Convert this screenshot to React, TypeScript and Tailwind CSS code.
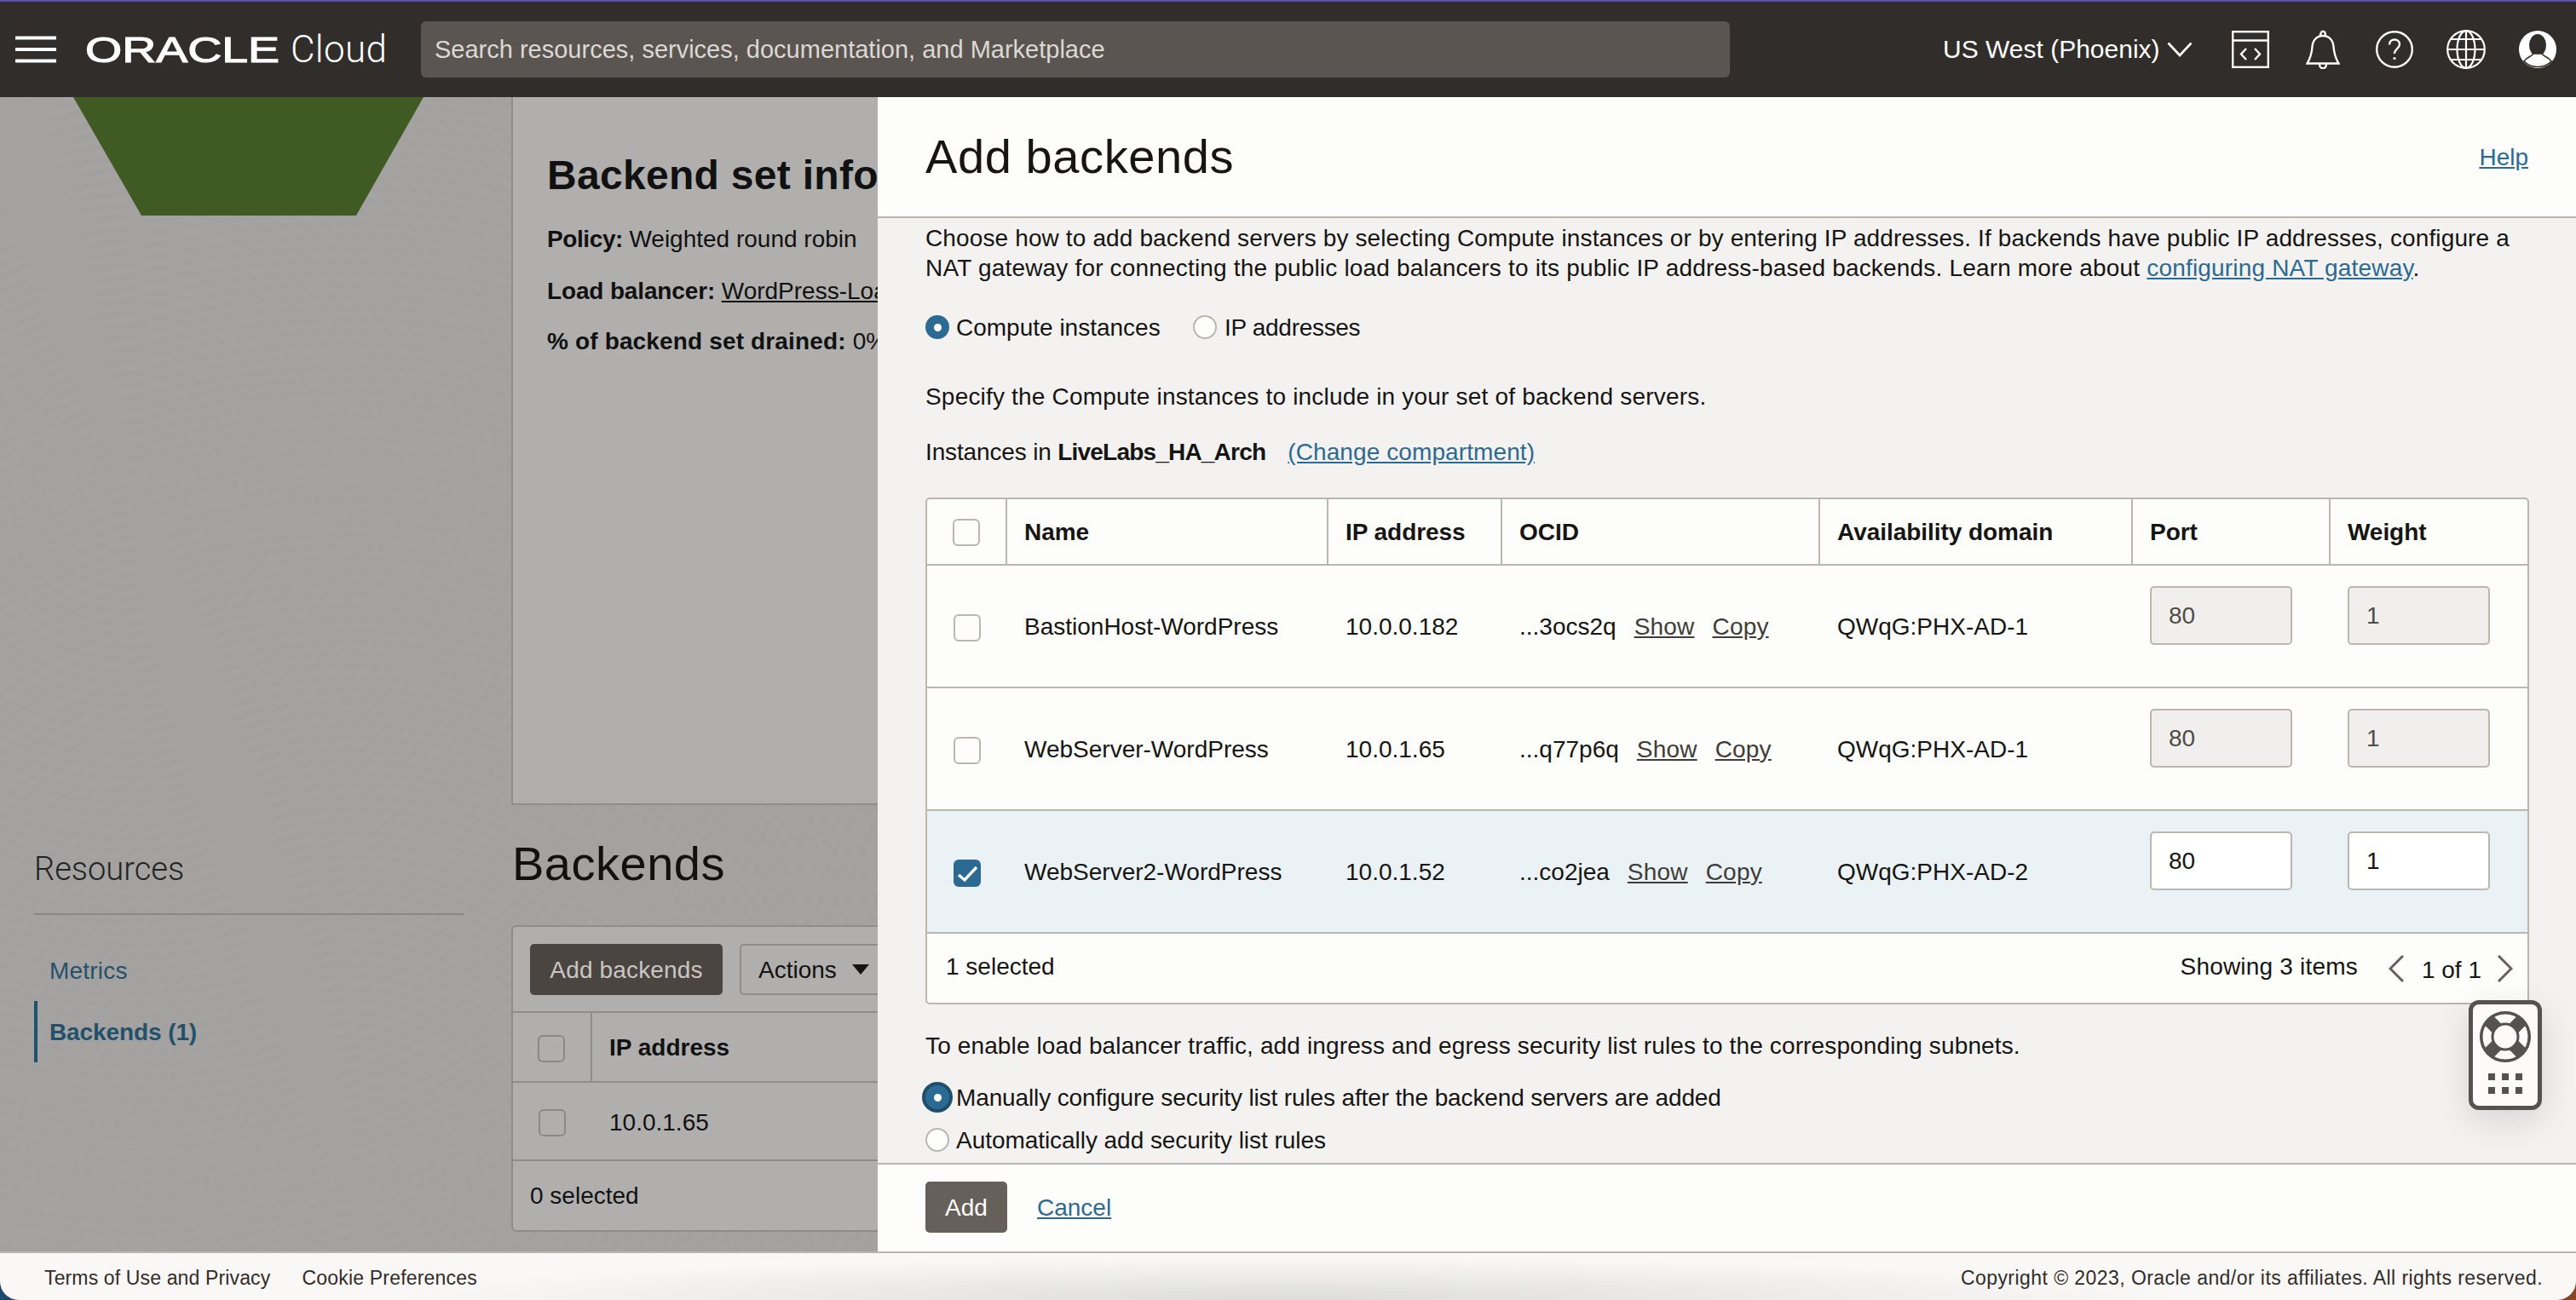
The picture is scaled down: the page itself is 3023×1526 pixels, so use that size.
import React from "react";

const COLS = "grid grid-cols-[94px_377px_204px_373px_367px_232px_1fr]";
const texture =
  "bg-[repeating-radial-gradient(circle_at_150px_450px,rgba(0,0,0,0.012)_0px,transparent_7px,rgba(0,0,0,0.012)_14px),repeating-radial-gradient(circle_at_410px_1270px,rgba(0,0,0,0.012)_0px,transparent_7px,rgba(0,0,0,0.012)_14px)]";

function Check({ checked = false, dim = false }: { checked?: boolean; dim?: boolean }) {
  if (checked) {
    return (
      <div className="w-[32px] h-[32px] rounded-[6px] bg-[#2b6a92] flex items-center justify-center">
        <svg width="24" height="24" viewBox="0 0 24 24" fill="none">
          <path d="M2 14l7 6L23 5" stroke="#fff" strokeWidth="3.4" />
        </svg>
      </div>
    );
  }
  return (
    <div
      className={
        dim
          ? "w-[32px] h-[32px] rounded-[6px] border-2 border-[#8b8886] bg-[#b0afad]"
          : "w-[32px] h-[32px] rounded-[6px] border-2 border-[#bcb6b1] bg-[#fdfdfb]"
      }
    />
  );
}

function Radio({ on = false, focus = false }: { on?: boolean; focus?: boolean }) {
  if (on) {
    return (
      <div
        className={
          focus
            ? "w-[28px] h-[28px] rounded-full bg-[#2b6a92] flex items-center justify-center shrink-0 ring-4 ring-[#1f4d6c]"
            : "w-[28px] h-[28px] rounded-full bg-[#2b6a92] flex items-center justify-center shrink-0"
        }
      >
        <div className="w-[9px] h-[9px] rounded-full bg-white" />
      </div>
    );
  }
  return <div className="w-[28px] h-[28px] rounded-full bg-[#fdfdfb] border-2 border-[#bcb6b1] shrink-0" />;
}

function HeadCell({ children }: { children?: React.ReactNode }) {
  return (
    <div className="flex items-center pl-[20px] font-bold tracking-[-0.05px] border-r-2 border-[#bcb6b1] last:border-r-0">{children}</div>
  );
}

type Row = { name: string; ip: string; ocid: string; ad: string; selected: boolean };
const rows: Row[] = [
  { name: "BastionHost-WordPress", ip: "10.0.0.182", ocid: "...3ocs2q", ad: "QWqG:PHX-AD-1", selected: false },
  { name: "WebServer-WordPress", ip: "10.0.1.65", ocid: "...q77p6q", ad: "QWqG:PHX-AD-1", selected: false },
  { name: "WebServer2-WordPress", ip: "10.0.1.52", ocid: "...co2jea", ad: "QWqG:PHX-AD-2", selected: true },
];

function Field({ value, enabled }: { value: string; enabled: boolean }) {
  return (
    <div
      className={
        enabled
          ? "w-[167px] h-[69px] mt-[24px] rounded-[5px] border-2 border-[#bcb6b1] bg-white text-[#161513] pl-[20px] flex items-center"
          : "w-[167px] h-[69px] mt-[24px] rounded-[5px] border-2 border-[#bcb6b1] bg-[#f1efed] text-[#4f4b47] pl-[20px] flex items-center"
      }
    >
      {value}
    </div>
  );
}

function TableRow({ r }: { r: Row }) {
  return (
    <div className={r.selected ? `${COLS} h-[144px] border-b-2 border-[#bcb6b1] bg-[#eaf2f6]` : `${COLS} h-[144px] border-b-2 border-[#bcb6b1] bg-[#fdfdfb]`}>
      <div className="flex items-center justify-center pt-[4px]">
        <Check checked={r.selected} />
      </div>
      <div className="flex items-center pl-[20px]">{r.name}</div>
      <div className="flex items-center pl-[20px]">{r.ip}</div>
      <div className="flex items-center pl-[20px] gap-[21px]">
        <span>{r.ocid}</span>
        <span className="underline text-[#3f3c39] tracking-[0.2px]">Show</span>
        <span className="underline text-[#3f3c39] tracking-[0.2px]">Copy</span>
      </div>
      <div className="flex items-center pl-[20px]">{r.ad}</div>
      <div className="pl-[20px]">
        <Field value="80" enabled={r.selected} />
      </div>
      <div className="pl-[20px]">
        <Field value="1" enabled={r.selected} />
      </div>
    </div>
  );
}

function Lifebuoy() {
  return (
    <svg width="62" height="62" viewBox="0 0 62 62" fill="none">
      <circle cx="31" cy="31" r="28" fill="#fcfbfa" stroke="#555350" strokeWidth="3" />
      <path d="M11 11L51 51M51 11L11 51" stroke="#555350" strokeWidth="15" />
      <circle cx="31" cy="31" r="28.5" stroke="#555350" strokeWidth="3" />
      <circle cx="31" cy="31" r="15" fill="#fcfbfa" stroke="#555350" strokeWidth="3" />
    </svg>
  );
}

function TopBar() {
  return (
    <header className="h-[114px] shrink-0 bg-[#312d2a] border-t-2 border-[#5b4fa8] flex items-center text-white">
      <svg className="ml-[18px] shrink-0" width="48" height="32" viewBox="0 0 48 32" fill="none">
        <path d="M0 2.5h48M0 16h48M0 29.5h48" stroke="#fff" strokeWidth="4" />
      </svg>
      <div className="ml-[34px] w-[241px] shrink-0 h-[44px] flex items-center">
        <span className="text-[43px] leading-[44px] origin-left scale-x-[1.29] inline-block [-webkit-text-stroke:1.2px_white]">ORACLE</span>
      </div>
      <span className="text-[44px] leading-[44px] font-['Roboto',sans-serif] font-light w-[153px] shrink-0 tracking-[0.3px]">Cloud</span>
      <div className="w-[1536px] shrink-0 h-[66px] rounded-[6px] bg-[#5a5551] text-[#dcd8d4] text-[29px] pl-[16px] flex items-center">
        Search resources, services, documentation, and Marketplace
      </div>
      <span className="ml-[250px] text-[30px] leading-[36px] whitespace-nowrap">US West (Phoenix)</span>
      <svg className="ml-[8px] shrink-0" width="30" height="18" viewBox="0 0 30 18" fill="none">
        <path d="M1.5 1.5L15 16L28.5 1.5" stroke="#fff" strokeWidth="2.6" />
      </svg>
      <svg className="ml-[46px] shrink-0" width="44" height="44" viewBox="0 0 44 44" fill="none" stroke="#fff" strokeWidth="2.4">
        <rect x="1.2" y="1.2" width="41.6" height="41.6" />
        <path d="M1 11.5h42" />
        <path d="M17 21l-6 6.5 6 6.5M27 21l6 6.5-6 6.5" />
      </svg>
      <svg className="ml-[43px] shrink-0" width="40" height="46" viewBox="0 0 40 46" fill="none" stroke="#fff" strokeWidth="2.4">
        <path d="M1.5 39.5h37C34 32 33 26 32.5 20 32 12 27 7 20 7S8 12 7.5 20C7 26 6 32 1.5 39.5Z" />
        <path d="M17 7c0-7 6-7 6 0M16 40c0 7 8 7 8 0" />
      </svg>
      <svg className="ml-[42px] shrink-0" width="44" height="44" viewBox="0 0 44 44" fill="none" stroke="#fff" strokeWidth="2.4">
        <circle cx="22" cy="22" r="20.8" />
        <path d="M16 16.5c0-4 2.8-6 6-6s6 2 6 5.5c0 5-6 5.5-6 11" />
        <circle cx="22" cy="32.5" r="1.6" fill="#fff" stroke="none" />
      </svg>
      <svg className="ml-[39px] shrink-0" width="46" height="46" viewBox="0 0 46 46" fill="none" stroke="#fff" strokeWidth="2.2">
        <circle cx="23" cy="23" r="21.8" />
        <ellipse cx="23" cy="23" rx="10.5" ry="21.8" />
        <path d="M23 1v44M1.2 23h43.6M5 11h36M5 35h36" />
      </svg>
      <svg className="ml-[39px] shrink-0" width="44" height="44" viewBox="0 0 44 44" fill="none">
        <circle cx="22" cy="22" r="22" fill="#fff" />
        <ellipse cx="22" cy="17" rx="10" ry="13" fill="#312d2a" />
        <path d="M6 36c4-6 9-5 11-9h10c2 4 7 3 11 9-4 4-10 6.5-16 6.5S10 40 6 36Z" fill="#fff" stroke="#312d2a" strokeWidth="1.6" />
      </svg>
    </header>
  );
}

function Background() {
  return (
    <div className={`w-[1030px] shrink-0 flex overflow-hidden bg-[#a5a4a3] text-[#111] ${texture}`}>
      <aside className="w-[600px] shrink-0 flex flex-col">
        <svg className="shrink-0" width="600" height="139" viewBox="0 0 600 139">
          <polygon points="86,0 497,0 418,139 166,139" fill="#405a24" />
        </svg>
        <div className="mt-[739px] ml-[40px] h-[56px] flex items-center text-[38px] font-['Roboto',sans-serif] font-light text-[#222]">
          Resources
        </div>
        <div className="ml-[40px] mt-[24px] w-[504px] h-[2px] bg-[#8a8785]" />
        <div className="ml-[58px] mt-[47px] h-[36px] flex items-center text-[#23506b] tracking-[0.2px]">Metrics</div>
        <div className="ml-[40px] mt-[18px] h-[72px] border-l-4 border-[#23506b] pl-[14px] flex items-center font-bold text-[#23506b] tracking-[-0.1px]">
          Backends (1)
        </div>
      </aside>
      <section className="w-[800px] shrink-0 flex flex-col">
        <div className="h-[831px] shrink-0 bg-[#b0afad] border-l-2 border-b-2 border-[#8f8c8a] pl-[40px]">
          <h2 className="mt-[63px] h-[56px] flex items-center text-[48px] font-bold whitespace-nowrap tracking-[0.3px]">Backend set information</h2>
          <p className="mt-[30px] h-[35px] flex items-center whitespace-pre">
            <b className="tracking-[-0.4px]">Policy: </b>Weighted round robin
          </p>
          <p className="mt-[26px] h-[35px] flex items-center whitespace-pre">
            <b className="tracking-[-0.15px]">Load balancer: </b>
            <span className="underline">WordPress-LoadBalancer</span>
          </p>
          <p className="mt-[24px] h-[35px] flex items-center whitespace-pre">
            <b className="tracking-[0.15px]">% of backend set drained: </b>0%
          </p>
        </div>
        <h2 className="mt-[35px] pl-[1px] h-[66px] flex items-center text-[56px] tracking-[0.5px]">Backends</h2>
        <div className="mt-[40px] h-[360px] w-[900px] shrink-0 bg-[#b0afad] border-2 border-[#8f8c8a] rounded-[6px] flex flex-col">
          <div className="h-[101px] shrink-0 border-b-2 border-[#8f8c8a] pl-[20px] pt-[20px] flex gap-[20px]">
            <div className="w-[226px] h-[60px] rounded-[5px] bg-[#4a4541] text-[#c9c6c3] flex items-center justify-center tracking-[0.15px]">Add backends</div>
            <div className="w-[300px] h-[60px] rounded-[5px] border-2 border-[#8f8c8a] flex items-center pl-[20px]">
              Actions
              <svg className="ml-[18px]" width="20" height="12" viewBox="0 0 20 12">
                <polygon points="0,0 20,0 10,12" fill="#161513" />
              </svg>
            </div>
          </div>
          <div className="h-[82px] shrink-0 border-b-2 border-[#8f8c8a] flex">
            <div className="w-[93px] flex items-center justify-center border-r-2 border-[#8f8c8a] pr-[1px] pt-[3px]">
              <Check dim />
            </div>
            <div className="pl-[20px] flex items-center font-bold pt-[1px]">IP address</div>
          </div>
          <div className="h-[92px] shrink-0 border-b-2 border-[#8f8c8a] flex">
            <div className="w-[93px] flex items-center justify-center pr-[1px] pt-[4px]">
              <Check dim />
            </div>
            <div className="pl-[20px] flex items-center pt-[2px]">10.0.1.65</div>
          </div>
          <div className="flex-1 pl-[20px] flex items-center">0 selected</div>
        </div>
      </section>
    </div>
  );
}

function Panel() {
  return (
    <main className="flex-1 min-w-0 flex flex-col bg-[#f3f2f1] text-[#161513]">
      <div className="h-[142px] shrink-0 bg-[#fdfdfb] border-b-2 border-[#bcb6b1] flex items-center justify-between pl-[56px] pr-[56px]">
        <h1 className="text-[56px] leading-[66px] tracking-[0.6px]">Add backends</h1>
        <a className="underline text-[#2b6a92]">Help</a>
      </div>
      <div className="flex-1 min-h-0 overflow-hidden pl-[56px] pr-[55px] pt-[7px] relative">
        <p className="h-[70px] leading-[34.5px] tracking-[0.13px]">
          Choose how to add backend servers by selecting Compute instances or by entering IP addresses. If backends have public IP addresses, configure a{" "}
          <span className="tracking-[0.18px]">
            NAT gateway for connecting the public load balancers to its public IP address-based backends. Learn more about{" "}
            <a className="underline text-[#2b6a92]">configuring NAT gateway</a>.
          </span>
        </p>
        <div className="mt-[33px] h-[36px] flex items-center">
          <Radio on />
          <span className="ml-[8px] w-[278px]">Compute instances</span>
          <Radio />
          <span className="ml-[9px] tracking-[-0.3px]">IP addresses</span>
        </div>
        <p className="mt-[46px] leading-[35px] tracking-[0.19px]">Specify the Compute instances to include in your set of backend servers.</p>
        <p className="mt-[30px] leading-[35px] flex whitespace-pre">
          <span className="tracking-[-0.15px]">Instances in </span>
          <b className="tracking-[-0.8px]">LiveLabs_HA_Arch</b>
          <a className="ml-[26px] underline text-[#2b6a92] tracking-[0.1px]">(Change compartment)</a>
        </p>
        <div className="mt-[36px] rounded-[5px] border-2 border-[#bcb6b1] overflow-hidden bg-[#fdfdfb]">
          <div className={`${COLS} h-[78px] border-b-2 border-[#bcb6b1]`}>
            <HeadCell>
              <div className="pl-[10px] pt-[2px]">
                <Check />
              </div>
            </HeadCell>
            <HeadCell>Name</HeadCell>
            <HeadCell>IP address</HeadCell>
            <HeadCell>OCID</HeadCell>
            <HeadCell>Availability domain</HeadCell>
            <HeadCell>Port</HeadCell>
            <HeadCell>Weight</HeadCell>
          </div>
          {rows.map((r) => (
            <TableRow key={r.name} r={r} />
          ))}
          <div className="h-[81px] flex items-center pl-[22px] pr-[17px]">
            <span className="-mt-[4px]">1 selected</span>
            <span className="ml-auto -mt-[4px] tracking-[0.2px]">Showing 3 items</span>
            <svg className="ml-[36px]" width="18" height="32" viewBox="0 0 18 32" fill="none">
              <path d="M17 1L2 16l15 15" stroke="#665f5a" strokeWidth="3" />
            </svg>
            <span className="ml-[21px] mr-[19px] mt-[3px]">1 of 1</span>
            <svg width="18" height="32" viewBox="0 0 18 32" fill="none">
              <path d="M1 1l15 15L1 31" stroke="#665f5a" strokeWidth="3" />
            </svg>
          </div>
        </div>
        <p className="mt-[31px] leading-[35px] tracking-[0.13px]">To enable load balancer traffic, add ingress and egress security list rules to the corresponding subnets.</p>
        <div className="mt-[25px] h-[36px] flex items-center">
          <Radio on focus />
          <span className="ml-[8px] tracking-[-0.13px]">Manually configure security list rules after the backend servers are added</span>
        </div>
        <div className="mt-[14px] h-[36px] flex items-center">
          <Radio />
          <span className="ml-[8px] tracking-[-0.05px]">Automatically add security list rules</span>
        </div>
        <div className="absolute left-[1867px] top-[918px] w-[86px] h-[129px] rounded-[12px] border-[5px] border-[#555350] bg-[#fcfbfa] shadow-[0_12px_40px_rgba(0,0,0,0.12)] flex flex-col items-center pt-[7px]">
          <Lifebuoy />
          <svg className="mt-[12px]" width="40" height="24" viewBox="0 0 40 24" fill="#555350">
            <rect x="0" y="0" width="8" height="8" />
            <rect x="16" y="0" width="8" height="8" />
            <rect x="32" y="0" width="8" height="8" />
            <rect x="0" y="16" width="8" height="8" />
            <rect x="16" y="16" width="8" height="8" />
            <rect x="32" y="16" width="8" height="8" />
          </svg>
        </div>
      </div>
      <div className="h-[104px] shrink-0 bg-[#fdfdfb] border-t-2 border-[#bcb6b1] flex items-center pl-[56px] gap-[35px] pb-[2px]">
        <div className="w-[96px] h-[60px] rounded-[5px] bg-[#665f5a] text-white flex items-center justify-center">Add</div>
        <a className="underline text-[#2b6a92]">Cancel</a>
      </div>
    </main>
  );
}

export default function App() {
  return (
    <div className="w-[3023px] h-[1526px] overflow-hidden flex flex-col font-['Liberation_Sans',Arial,sans-serif] text-[28px] leading-[35px] bg-[linear-gradient(to_right,#1f4a70_50%,#8a4520_50%)]">
      <TopBar />
      <div className="flex-1 min-h-0 flex">
        <Background />
        <Panel />
      </div>
      <footer className="h-[57px] shrink-0 rounded-b-[22px] border-t-2 border-[#bcb6b1] bg-[radial-gradient(ellipse_1050px_50px_at_50%_100%,#dcdcdb,#f9f8f6)] flex items-center pl-[52px] pr-[39px] pt-[2px] text-[23px] leading-[28px] text-[#312d2a]">
        <span className="tracking-[0.14px]">Terms of Use and Privacy</span>
        <span className="ml-[37px] tracking-[0.2px]">Cookie Preferences</span>
        <span className="ml-auto tracking-[0.44px]">Copyright © 2023, Oracle and/or its affiliates. All rights reserved.</span>
      </footer>
    </div>
  );
}
